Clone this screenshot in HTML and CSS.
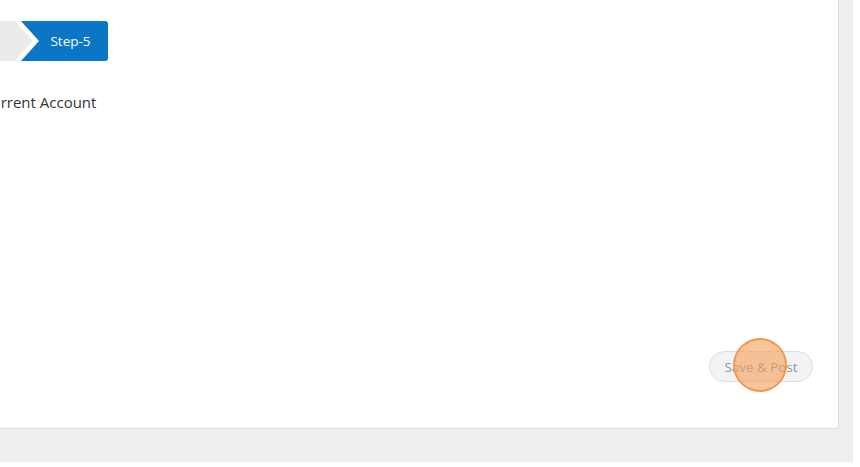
FILE: index.html
```html
<!DOCTYPE html>
<html>
<head>
<meta charset="utf-8">
<link rel="stylesheet" href="styles.css">
</head>
<body>
<div class="page">
  <div class="card">
    <div class="content">
      <div class="steps">
        <div class="step step-done"></div>
        <div class="step step-active">Step-5</div>
      </div>
      <div class="account">Current Account</div>
      <div class="spacer"></div>
      <div class="footer">
        <button class="btn-save">Save &amp; Post</button>
        <span class="click-marker"></span>
      </div>
    </div>
  </div>
</div>
</body>
</html>
```
FILE: styles.css
```css
html, body {
  margin: 0;
  padding: 0;
  background: #ffffff;
}
body {
  font-family: "Open Sans", "Liberation Sans", sans-serif;
  width: 860px;
  height: 467px;
  overflow: hidden;
}
.page {
  width: 853px;
  height: 462px;
  background: #efeeee;
  box-sizing: border-box;
}
.card {
  width: 839px;
  height: 429px;
  background: #ffffff;
  border-right: 1px solid #dddcdc;
  border-bottom: 1px solid #dddcdc;
  border-bottom-right-radius: 3px;
  box-sizing: border-box;
  overflow: hidden;
}
.content {
  display: flex;
  flex-direction: column;
  height: 100%;
  margin-left: -18px;
  box-sizing: border-box;
  padding: 21px 25px 46px 0;
}
.steps {
  display: flex;
  height: 40px;
}
.step {
  height: 40px;
  display: flex;
  align-items: center;
  justify-content: center;
  font-size: 13.5px;
}
.step-done {
  width: 51px;
  background: #ebebeb;
  clip-path: polygon(0 0, calc(100% - 18px) 0, 100% 50%, calc(100% - 18px) 100%, 0 100%);
}
.step-active {
  margin-left: -12px;
  width: 87px;
  padding-left: 12px;
  box-sizing: border-box;
  background: #0b76c6;
  color: #ffffff;
  border-radius: 0 3px 3px 0;
  clip-path: polygon(0 0, 100% 0, 100% 100%, 0 100%, 18px 50%);
}
.account {
  margin-top: 31px;
  font-size: 15px;
  color: #333333;
  line-height: 20px;
}
.spacer {
  flex: 1;
}
.footer {
  display: flex;
  justify-content: flex-end;
  position: relative;
}
.btn-save {
  width: 104px;
  height: 31px;
  border-radius: 16px;
  border: 1px solid #dcdcdc;
  background: #f3f3f3;
  color: #8597a8;
  font-family: "Open Sans", "Liberation Sans", sans-serif;
  font-size: 13.4px;
  padding: 0;
}
.click-marker {
  position: absolute;
  right: 26px;
  top: -13px;
  width: 50px;
  height: 50px;
  border-radius: 50%;
  background: rgba(246, 158, 86, 0.6);
  border: 2px solid rgba(241, 146, 66, 0.85);
}
```
